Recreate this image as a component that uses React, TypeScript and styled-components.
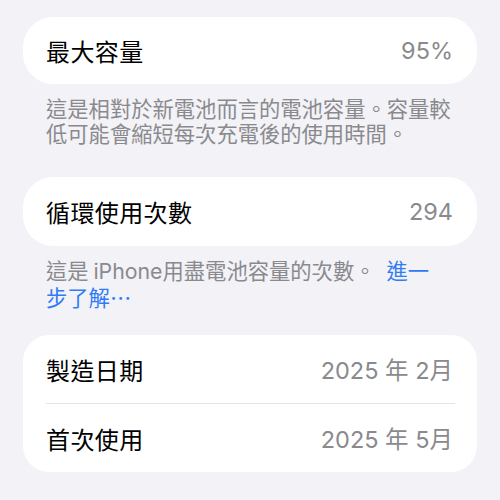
import React from "react";
import styled, { createGlobalStyle } from "styled-components";

const Global = createGlobalStyle`
  html, body {
    margin: 0;
    padding: 0;
    background: #f2f2f7;
  }
  body {
    font-family: "Inter", "Noto Sans CJK TC", sans-serif;
    -webkit-font-smoothing: antialiased;
  }
`;

const Page = styled.div`
  width: 500px;
  height: 500px;
  box-sizing: border-box;
  padding: 17px 23px 0;
  display: flex;
  flex-direction: column;
  background: #f2f2f7;
`;

const Card = styled.div<{ $radius?: number }>`
  background: #ffffff;
  border-radius: ${(p) => p.$radius ?? 28}px;
  display: flex;
  flex-direction: column;
`;

const Row = styled.div<{ $h?: number }>`
  height: ${(p) => p.$h ?? 68}px;
  display: flex;
  align-items: center;
  justify-content: space-between;
  padding: 0 24px 0 23px;
  box-sizing: border-box;
`;

const Divider = styled.div`
  height: 1px;
  margin: 0 22px 0 23px;
  background: #e3e3e8;
`;

const Label = styled.span`
  font-family: "Noto Sans CJK TC", sans-serif;
  font-size: 24px;
  color: #000000;
  letter-spacing: 0.4px;
`;

const Value = styled.span`
  font-family: "Inter", "Noto Sans CJK TC", sans-serif;
  font-size: 23.5px;
  color: #8a8a8e;
`;

const Footer = styled.p<{ $h: number }>`
  margin: 0;
  padding: 11px 23px 0;
  font-family: "Noto Sans CJK TC", sans-serif;
  font-size: 21.3px;
  line-height: 25px;
  color: #8a8a8e;
  height: ${(p) => p.$h}px;
  box-sizing: border-box;
`;

const Latin = styled.span`
  font-family: "Inter", "Noto Sans CJK TC", sans-serif;
  line-height: 25px;
`;

const Link = styled.span<{ $gap?: number }>`
  color: #2f7bf5;
  margin-left: ${(p) => p.$gap ?? 0}px;
`;

export default function App() {
  return (
    <>
      <Global />
      <Page>
        <Card $radius={30}>
          <Row $h={67}>
            <Label>最大容量</Label>
            <Value>95%</Value>
          </Row>
        </Card>
        <Footer $h={93}>
          這是相對於新電池而言的電池容量。容量較
          <br />
          低可能會縮短每次充電後的使用時間。
        </Footer>
        <Card $radius={30}>
          <Row $h={69}>
            <Label>循環使用次數</Label>
            <Value>294</Value>
          </Row>
        </Card>
        <Footer $h={89}>
          這是 <Latin>iPhone</Latin>用盡電池容量的次數。<Link $gap={11}>進一</Link>
          <br />
          <Link>步了解⋯</Link>
        </Footer>
        <Card $radius={26}>
          <Row $h={68}>
            <Label>製造日期</Label>
            <Value>2025 年 2月</Value>
          </Row>
          <Divider />
          <Row $h={68}>
            <Label>首次使用</Label>
            <Value>2025 年 5月</Value>
          </Row>
        </Card>
      </Page>
    </>
  );
}
